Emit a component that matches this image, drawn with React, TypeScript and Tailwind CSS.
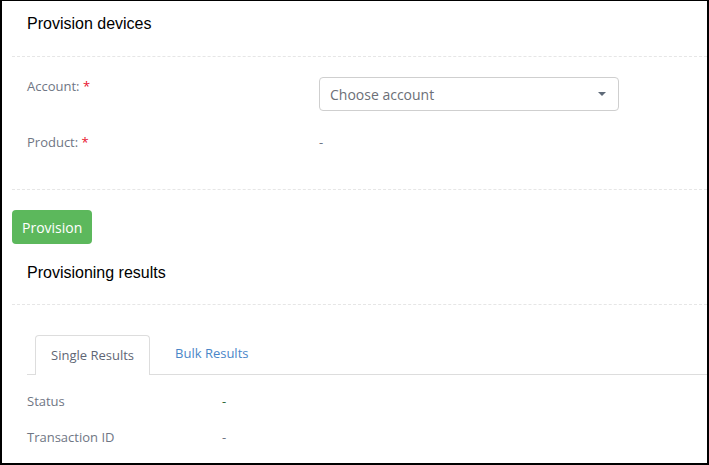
// Provision devices — account/product form plus results tabs.

const label = "text-[13px] text-[#6f7684]";
const nunito = { fontFamily: '"Open Sans", "Noto Sans", sans-serif' };

export default function App() {
  return (
    <div
      className="h-[465px] w-[709px] overflow-hidden border-t border-l-2 border-r-2 border-b-2 border-black bg-white"
      style={{ fontFamily: '"Liberation Sans", Arial, sans-serif' }}
    >
      <div className="pl-[10px]">
        <div className="flex h-[55px] items-center pb-[10px] pl-[15px] pt-[1px] text-[16px] text-black">Provision devices</div>
        <div className="border-b border-dashed border-[#e6e6e6]" />

        <div className="pl-[15px]" style={nunito}>
          <div className="flex h-[64px] items-start pt-[20px]">
            <div className={`${label} w-[292px]`}>
              Account: <span className="text-[#e8112d]">*</span>
            </div>
            <div className="flex h-[34px] w-[300px] items-center justify-between rounded border border-[#cfcfcf] px-[10px] text-[14px] text-[#6c6f77]">
              <span>Choose account</span>
              <svg width="10" height="6" viewBox="0 0 10 6" className="mr-[1px]">
                <path d="M1 1h8L5 5z" fill="#5e6a78" />
              </svg>
            </div>
          </div>
          <div className="flex h-[68px] items-start pt-[12px]">
            <div className={`${label} w-[292px]`}>
              Product: <span className="text-[#e8112d]">*</span>
            </div>
            <div className="text-[13px] text-[#6f7684]">-</div>
          </div>
        </div>
        <div className="border-b border-dashed border-[#e6e6e6]" />
      </div>

      <div className="pl-[10px] pt-[20px]">
        <button className="h-[34px] rounded bg-[#5cb85c] px-[10px] text-[14px] text-white" style={nunito}>
          Provision
        </button>
        <div className="flex h-[47px] items-center pl-[15px] pt-[11px] text-[16px] text-black">Provisioning results</div>
        <div className="mt-[13px] border-b border-dashed border-[#e6e6e6]" />

        <div className="pl-[15px] pt-[29px]" style={nunito}>
          <div className="flex items-end border-b border-[#dddddd] pl-[8px]">
            <div className="-mb-px flex h-[40px] items-center rounded-t border border-b-0 border-[#dddddd] bg-white px-[15px] text-[13px] text-[#5f6675]">
              Single Results
            </div>
            <div className="flex h-[40px] items-center px-[25px] text-[13px] text-[#4a86c8]">Bulk Results</div>
          </div>
          <div className="flex h-[37px] items-end pb-[1px] text-[13px]">
            <div className="w-[195px] text-[#6f7684]">Status</div>
            <div className="text-[#2e6b3a]">-</div>
          </div>
          <div className="flex h-[36px] items-end pb-[1px] text-[13px]">
            <div className="w-[195px] text-[#6f7684]">Transaction ID</div>
            <div className="text-[#6f7684]">-</div>
          </div>
        </div>
      </div>
    </div>
  );
}
